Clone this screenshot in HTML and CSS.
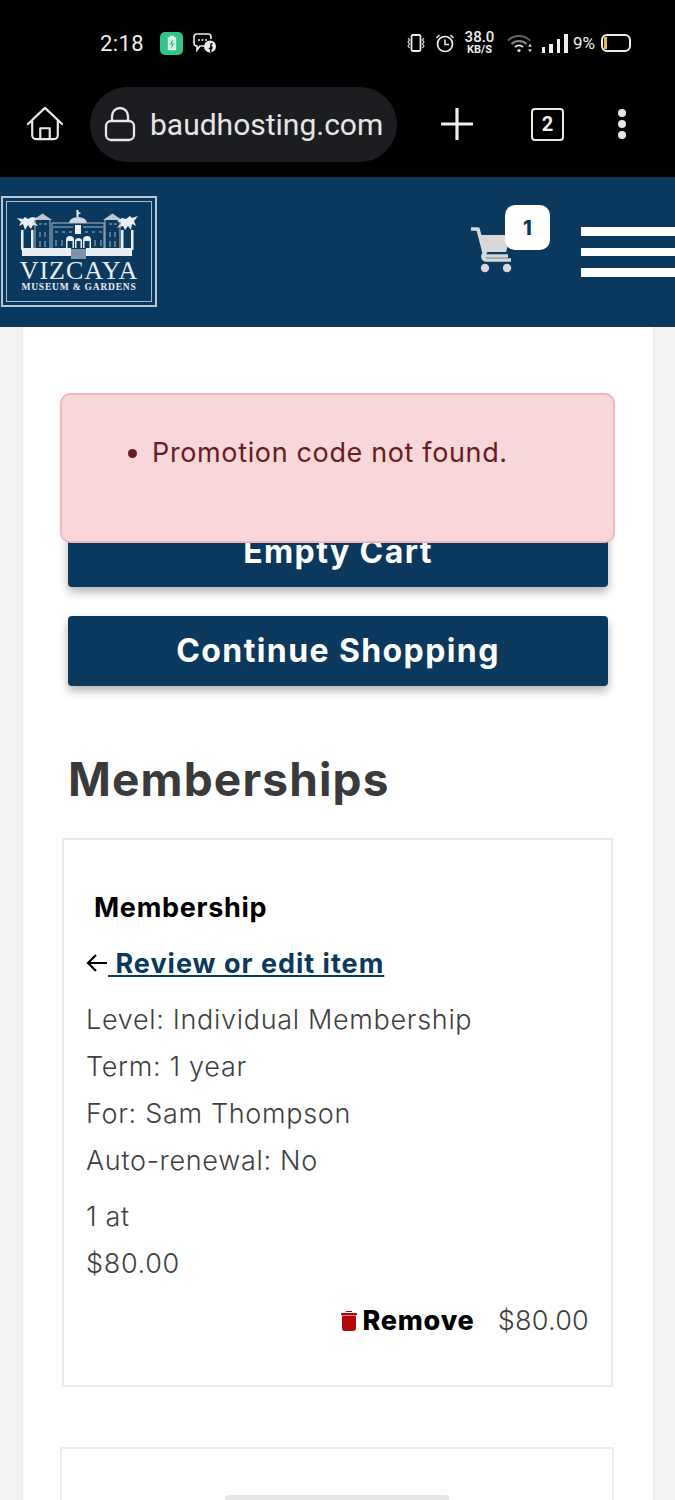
FILE: index.html
```html
<!DOCTYPE html>
<html lang="en">
<head>
<meta charset="utf-8">
<title>Vizcaya Cart</title>
<link rel="stylesheet" href="styles.css">
</head>
<body>
<div class="chrome">
  <div class="status">
    <div class="status-left">
      <span class="time">2:18</span>
      <span class="batt-app"><svg width="12" height="16" viewBox="0 0 12 16"><path d="M4 1.500h4M2.500 3h7v11.500h-7z" fill="#bdf0d8" stroke="#eafff4" stroke-width="1.300"/><path d="M6.600 5.500 4.600 9h2.600l-1.600 3" fill="none" stroke="#2fb57c" stroke-width="1.100"/></svg></span>
      <svg class="msg" width="24" height="22" viewBox="0 0 24 22"><path d="M4 2h11a3 3 0 0 1 3 3v2M11 14H7l-3 4v-4a3 3 0 0 1-3-3V5a3 3 0 0 1 3-3" fill="none" stroke="#eee" stroke-width="1.600"/><circle cx="6" cy="8" r="1" fill="#eee"/><circle cx="9.500" cy="8" r="1" fill="#eee"/><circle cx="13" cy="8" r="1" fill="#eee"/><circle cx="17" cy="14.500" r="6" fill="#eee"/><path d="M17.800 20v-5h1.800M15.800 16.500h3.600M19.600 11.800h-.8a1 1 0 0 0-1 1V15" fill="none" stroke="#000" stroke-width="1.400"/></svg>
    </div>
    <div class="status-right">
      <svg class="vibrate" width="20" height="20" viewBox="0 0 20 20"><rect x="5.500" y="2" width="9" height="16" rx="1.500" fill="none" stroke="#eee" stroke-width="1.800"/><path d="M2 5l1.500 2L2 9l1.500 2L2 13l1.500 2M18 5l-1.500 2L18 9l-1.500 2L18 13l-1.500 2" fill="none" stroke="#eee" stroke-width="1.100"/></svg>
      <svg class="alarm" width="20" height="20" viewBox="0 0 20 20"><circle cx="10" cy="11" r="7.500" fill="none" stroke="#eee" stroke-width="1.700"/><path d="M10 6.500v5h4M1.500 5 4.500 2M18.500 5l-3-3" fill="none" stroke="#eee" stroke-width="1.500"/></svg>
      <div class="speed"><span class="speed-num">38.0</span><span class="speed-unit">KB/S</span></div>
      <svg class="wifi" width="26" height="20" viewBox="0 0 26 20"><path d="M1 7.500c6-6 16-6 22 0" fill="none" stroke="#666" stroke-width="1.800"/><path d="M4.500 11c4-4 11-4 15 0" fill="none" stroke="#888" stroke-width="1.800"/><path d="M8 14c2.500-2 5.500-2 8 0" fill="none" stroke="#eee" stroke-width="1.800"/><circle cx="12" cy="17.500" r="1.600" fill="#eee"/><path d="M23 11l2 2.500h-4zM23 19l2-2.500h-4z" fill="#eee"/></svg>
      <div class="signal"><i class="s1"></i><i class="s2"></i><i class="s3"></i><i class="s4"></i></div>
      <span class="pct">9%</span>
      <div class="battery"><span class="battery-fill"></span></div>
    </div>
  </div>
  <div class="browser">
    <svg class="home" width="40" height="38" viewBox="0 0 40 38"><path d="M2 19 20 2l18 17M6.500 15.500V31a4 4 0 0 0 4 4h19a4 4 0 0 0 4-4V15.500M15 35V23.500h10V35" fill="none" stroke="#e8e8e8" stroke-width="2.300" stroke-linecap="round" stroke-linejoin="round"/></svg>
    <div class="url">
      <svg width="32" height="36" viewBox="0 0 32 36"><rect x="2" y="15" width="28" height="19" rx="5" fill="none" stroke="#e8e8e8" stroke-width="2.300"/><path d="M8 15V10a8 8 0 0 1 16 0v5" fill="none" stroke="#e8e8e8" stroke-width="2.300"/></svg>
      <span class="url-text">baudhosting.com</span>
    </div>
    <svg class="plus" width="32" height="32" viewBox="0 0 32 32"><path d="M1 16h30M16 1v30" stroke="#eee" stroke-width="3.200" stroke-linecap="round"/></svg>
    <div class="tabs">2</div>
    <div class="dots"><i></i><i></i><i></i></div>
  </div>
</div>

<header class="nav">
  <div class="logo">
    <svg class="palace" width="124" height="50" viewBox="0 0 124 50">
      <g fill="#e9eef3">
        <path d="M16 10h19l-9.500-6.500z" fill="#b9c6d3"/><path d="M86 10h19l-9.500-6.500z" fill="#b9c6d3"/>
        <path d="M59.500 7V0h2v2.500h2v1.500h-2V7z"/>
        <path d="M52 13a9 6 0 0 1 18 0z" fill="#cfd8e2"/>
        <path d="M0 8l6 1 2-2 3 2 4-2 5 1-3 3 4 5-5-1-2 4-3-4-3 5-2-6-4 2 2-4z"/>
        <path d="M121 6l-6 2-2-2-4 3-4-1-5 3 4 2-4 5 6-2 2 4 3-4 3 4 1-6 4 2-2-5z"/>
        <rect x="4" y="20" width="2.500" height="20"/><rect x="14" y="20" width="2.500" height="20"/>
        <rect x="104" y="20" width="2.500" height="20"/><rect x="114" y="20" width="2.500" height="20"/>
        <rect x="5" y="38" width="49" height="8"/><rect x="69" y="38" width="46" height="8"/>
        <rect x="58" y="15" width="6" height="9"/>
        <path d="M49 30a4 4 0 0 1 8 0v8h-1.500v-7h-5v7H49zM58 30a4 4 0 0 1 7 0v8h-1.500v-7h-4v7H58zM66 30a4 4 0 0 1 8 0v8h-1.500v-7h-5v7H66z"/>
      </g>
      <g fill="none" stroke="#b9c6d3" stroke-width=".9">
        <path d="M35 13h52v25M35 13v25M36 17h20M66 17h20M38 22h3M45 22h3M52 22h3M68 22h3M75 22h3M82 22h3M39 30v6M45 30v6M78 30v6M84 30v6"/>
        <path d="M18 10v28M33 10v28M88 10v28M103 10v28M22 14h3M27 14h3M92 14h3M97 14h3M23 22v5M28 22v5M93 22v5M98 22v5M23 31v6M28 31v6M93 31v6M98 31v6"/>
      </g>
      <rect x="54" y="39" width="15" height="10" fill="#7d93aa"/>
    </svg>
    <div class="logo-name">VIZCAYA</div>
    <div class="logo-sub">MUSEUM &amp; GARDENS</div>
  </div>
  <div class="nav-right">
    <div class="cart">
      <svg width="46" height="46" viewBox="0 0 46 46"><path d="M1 2h7l7 27h23" fill="none" stroke="#d8d8d8" stroke-width="3.600" stroke-linejoin="round"/><path d="M9 8h32l-5 17H13z" fill="#d8d8d8"/><path d="M41 33H16a3.500 3.500 0 0 1-2-6l2-3" fill="none" stroke="#d8d8d8" stroke-width="3.600"/><circle cx="15" cy="41" r="4.200" fill="#d8d8d8"/><circle cx="37" cy="41" r="4.200" fill="#d8d8d8"/></svg>
      <span class="cart-count">1</span>
    </div>
    <div class="burger"><i></i><i></i><i></i></div>
  </div>
</header>

<main class="page">
  <div class="alert"><ul class="alert-list"><li>Promotion code not found.</li></ul></div>
  <section class="card">
    <a class="btn">Empty Cart</a>
    <a class="btn">Continue Shopping</a>
    <h1 class="title">Memberships</h1>
    <article class="item">
      <h2 class="item-name">Membership</h2>
      <div class="review"><svg width="22" height="20" viewBox="0 0 22 20"><path d="M21 10H2M10 2l-8 8 8 8" fill="none" stroke="#000" stroke-width="2.200"/></svg><a class="review-link">&nbsp;Review or edit item</a></div>
      <p class="line first">Level: Individual Membership</p>
      <p class="line">Term: 1 year</p>
      <p class="line">For: Sam Thompson</p>
      <p class="line">Auto-renewal: No</p>
      <p class="line qty">1 at</p>
      <p class="line">$80.00</p>
      <div class="item-foot">
        <svg width="16" height="21" viewBox="0 0 16 21"><path d="M5 1.500h6M.5 3.500h15V5H.5zM1.500 6.500h13v12a2 2 0 0 1-2 2h-9a2 2 0 0 1-2-2z" fill="#b50707" stroke="#b50707" stroke-width="1"/></svg>
        <span class="remove">Remove</span>
        <span class="price">$80.00</span>
      </div>
    </article>
    <div class="next"><span class="next-bar"></span></div>
  </section>
</main>
</body>
</html>
```

FILE: styles.css
```css
* { box-sizing: border-box; }
html, body { margin: 0; padding: 0; }
body { width: 675px; height: 1500px; overflow: hidden; background: #f1f3f3; font-family: "Inter", "Liberation Sans", sans-serif; }
p, h1, h2, ul { margin: 0; padding: 0; }

.chrome { background: #000; height: 177px; color: #eee; font-family: Roboto, sans-serif; }
.status { height: 86px; display: flex; justify-content: space-between; align-items: center; padding: 0 44px 0 100px; }
.status-left, .status-right { display: flex; align-items: center; }
.time { font-size: 22px; letter-spacing: .4px; margin-right: 16px; }
.batt-app { width: 23px; height: 23px; background: #33c486; border-radius: 5px; display: flex; align-items: center; justify-content: center; margin-right: 10px; }
.alarm { margin-left: 9px; }
.speed { display: flex; flex-direction: column; align-items: center; width: 31px; margin: 0 12px 0 9px; line-height: 1; font-weight: 700; }
.speed-num { font-size: 15px; font-weight: 500; line-height: 13px; }
.speed-unit { font-size: 11px; line-height: 11px; }
.signal { display: flex; align-items: flex-end; gap: 4px; height: 19px; margin-left: 9px; }
.signal i { width: 3.500px; background: #eee; display: block; }
.s1 { height: 6px; } .s2 { height: 9px; } .s3 { height: 14px; } .s4 { height: 19px; }
.pct { font-size: 17px; margin: 0 6px 0 5px; }
.battery { width: 30px; height: 18px; border: 2px solid #eee; border-radius: 6px; padding: 1px; }
.battery-fill { display: block; width: 3px; height: 100%; background: #e9b949; }

.browser { height: 91px; display: flex; align-items: center; padding-bottom: 15px; padding-left: 26px; }
.home { width: 38px; height: 36px; margin-right: 26px; }
.url { width: 307px; height: 75px; border-radius: 38px; background: #1c1d20; display: flex; align-items: center; padding-left: 14px; gap: 14px; margin-right: 44px; }
.url-text { font-size: 30px; color: #e6e6e6; }
.plus { margin-right: 58px; }
.tabs { width: 33px; height: 33px; border: 2px solid #e8e8e8; border-radius: 4px; display: flex; align-items: center; justify-content: center; font-size: 20px; font-weight: 700; margin-right: 54px; }
.dots { display: flex; flex-direction: column; gap: 3px; }
.dots i { width: 8px; height: 8px; border-radius: 50%; background: #e6e6e6; display: block; }

.nav { position: relative; z-index: 1; height: 150px; background: #0b395e; display: flex; justify-content: space-between; align-items: flex-start; }
.logo { margin-top: 19px; margin-left: 1px; width: 156px; height: 111px; border: 2px solid #b9c6d3; box-shadow: inset 0 0 0 3px #0b395e, inset 0 0 0 4px #aebccb; display: flex; flex-direction: column; align-items: center; padding-top: 12px; color: #e9eef3; }
.palace { flex: none; display: block; }
.logo-name { font-family: "Liberation Serif", serif; font-size: 26px; line-height: 22px; letter-spacing: 1px; }
.logo-sub { font-family: "Liberation Serif", serif; font-weight: 700; font-size: 9.500px; line-height: 11px; letter-spacing: .8px; }
.nav-right { display: flex; align-items: flex-start; }
.cart { position: relative; width: 46px; height: 46px; margin-right: 65px; margin-top: 50px; }
.cart svg { display: block; }
.cart-count { position: absolute; left: 35px; top: -22px; width: 45px; height: 45px; background: #fff; border-radius: 10px; color: #0b395e; font-weight: 800; font-size: 20px; display: flex; align-items: center; justify-content: center; }
.burger { width: 94px; margin-top: 50px; display: flex; flex-direction: column; gap: 12px; }
.burger i { display: block; height: 8.500px; background: #fff; }

.page { position: relative; height: 1173px; }
.card { margin: 0 23px; width: 630px; height: 1173px; background: #fff; padding: 190px 45px 0 45px; box-shadow: 0 0 2px #e2e2e2; display: flex; flex-direction: column; }
.alert { position: absolute; left: 60px; top: 66px; width: 555px; height: 150px; background: #f8d7da; border: 2px solid #f1b8be; border-radius: 10px; padding: 38px 0 0 90px; color: #6a1a21; z-index: 2; }
.alert-list { font-size: 27px; line-height: 40px; letter-spacing: .64px; }
.btn { display: flex; align-items: center; justify-content: center; flex: none; height: 70px; padding-bottom: 2px; background: #0b395e; color: #fff; font-weight: 700; font-size: 32px; border-radius: 4px; box-shadow: 0 5px 10px rgba(0,0,0,.3); margin-bottom: 29px; letter-spacing: 1.400px; }
.title { font-size: 46px; font-weight: 700; color: #3a3a3a; line-height: 56px; margin: 36px 0 31px 0; letter-spacing: 1.150px; }
.item { width: 551px; height: 549px; border: 2px solid #e9ebeb; margin-left: -6px; padding: 50px 22px 0 22px; flex: none; }
.item-name { font-size: 27px; line-height: 36px; font-weight: 700; color: #000; margin-left: 8px; letter-spacing: .7px; }
.review { display: flex; align-items: center; height: 36px; margin-top: 19px; }
.review svg { flex: none; }
.review-link { font-size: 27px; font-weight: 700; color: #0b395e; text-decoration: underline; letter-spacing: 1px; }
.line { font-size: 27px; line-height: 47px; color: #3f3f3f; font-weight: 300; letter-spacing: .68px; }
.first { margin-top: 15px; }
.qty { margin-top: 9px; }
.item-foot { display: flex; align-items: center; justify-content: flex-end; margin-top: 10px; height: 47px; }
.remove { font-size: 27px; font-weight: 800; color: #000; margin-left: 5px; margin-right: 23px; letter-spacing: .8px; }
.price { font-size: 27px; font-weight: 300; color: #3f3f3f; letter-spacing: .25px; }
.next { width: 554px; height: 60px; margin-top: 60px; margin-left: -8px; border: 2px solid #eceeee; flex: none; display: flex; justify-content: center; padding-top: 46px; }
.next-bar { width: 224px; height: 8px; background: #e6e6e6; border-radius: 4px; }
```
